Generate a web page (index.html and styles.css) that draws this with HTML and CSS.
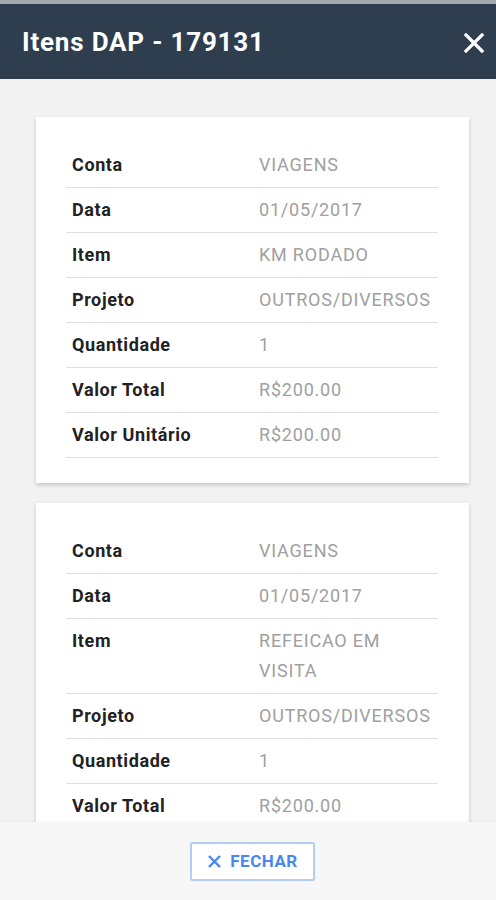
FILE: index.html
```html
<!DOCTYPE html>
<html lang="pt-BR">
<head>
  <meta charset="UTF-8">
  <meta name="viewport" content="width=device-width, initial-scale=1.0">
  <title>Itens DAP - 179131</title>
  <link rel="stylesheet" href="styles.css">
</head>
<body>
  <div class="modal">
    <div class="topbar"></div>
    <div class="header">
      <h1>Itens DAP - 179131</h1>
      <span class="close">
        <svg width="22" height="22" viewBox="0 0 22 22"><path d="M3 3L19 19M19 3L3 19" stroke="#fff" stroke-width="3.2" stroke-linecap="square"/></svg>
      </span>
    </div>

    <div class="content">
      <div class="card">
        <table>
          <tr><th>Conta</th><td>VIAGENS</td></tr>
          <tr><th>Data</th><td>01/05/2017</td></tr>
          <tr><th>Item</th><td>KM RODADO</td></tr>
          <tr><th>Projeto</th><td>OUTROS/DIVERSOS</td></tr>
          <tr><th>Quantidade</th><td>1</td></tr>
          <tr><th>Valor Total</th><td>R$200.00</td></tr>
          <tr><th>Valor Unitário</th><td>R$200.00</td></tr>
        </table>
      </div>

      <div class="card">
        <table>
          <tr><th>Conta</th><td>VIAGENS</td></tr>
          <tr><th>Data</th><td>01/05/2017</td></tr>
          <tr><th>Item</th><td>REFEICAO EM VISITA</td></tr>
          <tr><th>Projeto</th><td>OUTROS/DIVERSOS</td></tr>
          <tr><th>Quantidade</th><td>1</td></tr>
          <tr><th>Valor Total</th><td>R$200.00</td></tr>
          <tr><th>Valor Unitário</th><td>R$200.00</td></tr>
        </table>
      </div>
    </div>

    <div class="footer">
      <button type="button" class="btn-close">
        <svg width="15" height="15" viewBox="0 0 15 15"><path d="M2 2L13 13M13 2L2 13" stroke="#4a86f0" stroke-width="2.4"/></svg>
        <span>FECHAR</span>
      </button>
    </div>
  </div>
</body>
</html>
```

FILE: styles.css
```css
body {
  margin: 0;
  font-family: Roboto, "Liberation Sans", Arial, sans-serif;
  background-color: #f2f2f2;
}
.modal {
  height: 900px;
  display: flex;
  flex-direction: column;
  overflow: hidden;
}
.topbar {
  height: 4px;
  background-color: #a5a9ad;
}
.header {
  height: 75px;
  flex-shrink: 0;
  background-color: #2e3e4f;
  display: flex;
  align-items: center;
  justify-content: space-between;
  padding: 0 11px 0 22px;
}
.header h1 {
  margin: 0;
  color: #fff;
  font-size: 26px;
  letter-spacing: 0.8px;
  font-weight: bold;
}
.close {
  display: flex;
  margin-top: 2px;
}
.content {
  flex: 1;
  overflow: hidden;
  padding: 38px 27px 0 36px;
}
.card {
  background-color: #fff;
  box-shadow: 0 2px 4px rgba(0, 0, 0, 0.18);
  padding: 26px 31px 25px 30px;
  margin-bottom: 20px;
}
table {
  width: 100%;
  border-collapse: collapse;
}
th, td {
  text-align: left;
  vertical-align: top;
  font-size: 18px;
  letter-spacing: 0.8px;
  line-height: 30px;
  padding: 7px 6px 7px 6px;
  border-bottom: 1px solid #dedede;
}
th {
  width: 175px;
  color: #222;
  font-weight: bold;
  letter-spacing: 0.6px;
}
td {
  color: #a0a0a0;
}
.footer {
  height: 78px;
  flex-shrink: 0;
  background-color: #f7f7f7;
  display: flex;
  align-items: center;
  justify-content: center;
  padding-left: 9px;
  box-shadow: 0 -1px 2px rgba(0, 0, 0, 0.04);
}
.btn-close {
  width: 125px;
  height: 39px;
  display: flex;
  align-items: center;
  justify-content: center;
  gap: 8px;
  padding: 0;
  background-color: #fff;
  border: 2px solid #b3cdf6;
  border-radius: 2px;
  color: #4a86f0;
  font-family: Roboto, "Liberation Sans", Arial, sans-serif;
  font-size: 17px;
  letter-spacing: 0.5px;
  font-weight: bold;
  cursor: pointer;
}
```
